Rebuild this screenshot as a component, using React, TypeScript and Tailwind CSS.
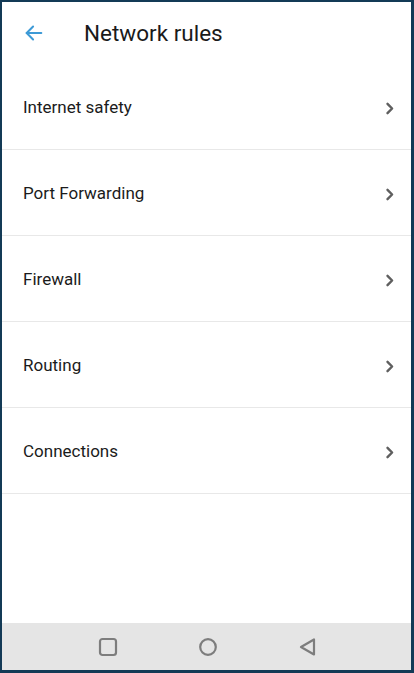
const rules = ["Internet safety", "Port Forwarding", "Firewall", "Routing", "Connections"];

export default function App() {
  return (
    <div
      className="flex h-[673px] w-[414px] flex-col border-t-2 border-l-2 border-r-[3px] border-b-[3px] border-[#133a56] bg-white"
      style={{ fontFamily: "Roboto, 'Noto Sans', sans-serif" }}
    >
      {/* Header */}
      <div className="flex h-[62px] shrink-0 items-center">
        <button className="ml-[20px] flex h-6 w-6 items-center justify-center text-[#3d9ad6]">
          <svg width="22" height="22" viewBox="0 0 24 24" fill="none" stroke="currentColor" strokeWidth="2.2" strokeLinecap="round" strokeLinejoin="round">
            <path d="M20 12H4" />
            <path d="M11 5l-7 7 7 7" />
          </svg>
        </button>
        <h1 className="ml-[38px] pt-[1px] text-[22.5px] text-[#1a1a1a]">Network rules</h1>
      </div>

      {/* Rules list */}
      <div className="flex flex-col">
        {rules.map((r) => (
          <div key={r} className="flex h-[86px] items-center justify-between border-b border-[#e8e8e8] pt-[3px] pl-[21px] pr-[16px]">
            <span className="text-[17px] text-[#1b1b1b]">{r}</span>
            <svg width="10" height="13" viewBox="0 0 10 13" fill="none" stroke="#5f5f5f" strokeWidth="2.4" strokeLinecap="round" strokeLinejoin="round">
              <path d="M2.5 1.8l4.6 4.7-4.6 4.7" />
            </svg>
          </div>
        ))}
      </div>

      <div className="flex-1" />

      {/* Nav bar */}
      <div className="flex h-[47px] shrink-0 items-center bg-[#e5e5e5] text-[#7d7d7d]">
        <div className="flex w-full items-center justify-center gap-[80px] pl-[2px]">
          <svg width="20" height="20" viewBox="0 0 20 20" fill="none" stroke="currentColor" strokeWidth="2.2">
            <rect x="2" y="2" width="16" height="16" rx="2.5" />
          </svg>
          <svg width="20" height="20" viewBox="0 0 20 20" fill="none" stroke="currentColor" strokeWidth="2.2">
            <circle cx="10" cy="10" r="7.8" />
          </svg>
          <svg width="20" height="20" viewBox="0 0 20 20" fill="none" stroke="currentColor" strokeWidth="2.2" strokeLinejoin="round">
            <path d="M16 2.5v15L3 10z" />
          </svg>
        </div>
      </div>
    </div>
  );
}
